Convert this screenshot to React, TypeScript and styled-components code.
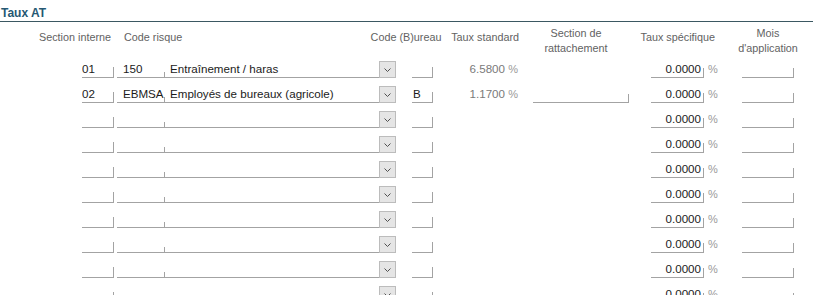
import React from 'react';
import styled, { createGlobalStyle } from 'styled-components';

interface Rate {
  section: string;
  code: string;
  label: string;
  office: string;
  standard?: string;
  attached: boolean;
  specific: string;
}

const rates: Rate[] = [
  { section: '01', code: '150', label: 'Entraînement / haras', office: '', standard: '6.5800', attached: false, specific: '0.0000' },
  { section: '02', code: 'EBMSA', label: 'Employés de bureaux (agricole)', office: 'B', standard: '1.1700', attached: true, specific: '0.0000' },
  ...Array.from({ length: 8 }, () => ({ section: '', code: '', label: '', office: '', attached: false, specific: '0.0000' })),
];

const COLUMNS = '82px 32px 3px 48px 214px 17px 16px 21px 86px 14px 96px 22px 53px 14px 24px 52px';

const GlobalStyle = createGlobalStyle`
  html, body {
    margin: 0;
    padding: 0;
    background: #ffffff;
    overflow: hidden;
  }
  body {
    font-family: 'Liberation Sans', Arial, sans-serif;
  }
`;

const Panel = styled.section`
  width: 840px;
  height: 295px;
  overflow: hidden;
  background: #ffffff;
`;

const Title = styled.h2`
  margin: 0;
  width: 813px;
  height: 22px;
  box-sizing: border-box;
  border-bottom: 1px solid #3b5862;
  padding: 6px 0 0 1px;
  font-size: 12px;
  line-height: 14px;
  font-weight: bold;
  color: #265873;
`;

const HeaderRow = styled.div`
  display: grid;
  grid-template-columns: ${COLUMNS};
  grid-template-areas: 'hsect hsect . hcode hcode hbur hbur hbur hstd hrat hrat . hspec hspec . hmois';
  height: 39px;
  box-sizing: border-box;
  padding-top: 4px;
  align-items: start;
`;

const HeadCell = styled.div<{ $area: string; $align: 'left' | 'center' | 'right'; $single?: boolean }>`
  grid-area: ${({ $area }) => $area};
  display: flex;
  flex-direction: column;
  align-items: ${({ $align }) => ($align === 'left' ? 'flex-start' : $align === 'right' ? 'flex-end' : 'center')};
  margin-top: ${({ $single }) => ($single ? '4px' : '0')};
  font-size: 10.8px;
  line-height: 15px;
  color: #626262;
  white-space: nowrap;
  text-align: ${({ $align }) => $align};
`;

const Rows = styled.div`
  display: flex;
  flex-direction: column;
`;

const Row = styled.div`
  display: grid;
  grid-template-columns: ${COLUMNS};
  grid-template-areas: '. sect . code label btn . bur std . rat . spec pct . mois';
  height: 25px;
  align-items: start;
`;

const Field = styled.div<{ $area: string; $tick: number; $pad?: number; $right?: boolean }>`
  grid-area: ${({ $area }) => $area};
  height: 17px;
  box-sizing: border-box;
  border-bottom: 1px solid #a3a3a3;
  background: linear-gradient(#a3a3a3, #a3a3a3) no-repeat right bottom / 1px ${({ $tick }) => $tick}px;
  padding: 0 ${({ $right }) => ($right ? 3 : 0)}px 0 ${({ $pad }) => $pad ?? 0}px;
  font-size: 11.6px;
  line-height: 16px;
  color: #1b1b1b;
  white-space: nowrap;
  overflow: hidden;
  text-align: ${({ $right }) => ($right ? 'right' : 'left')};
`;

const DropButton = styled.div`
  grid-area: btn;
  width: 17px;
  height: 17px;
  box-sizing: border-box;
  border: 1px solid #bcbcbc;
  background: #e5e5e5;
  display: flex;
  align-items: center;
  justify-content: center;
`;

const Standard = styled.div`
  grid-area: std;
  padding-right: 1px;
  font-size: 11.6px;
  line-height: 16px;
  color: #7a7a7a;
  text-align: right;
  white-space: nowrap;
`;

const Percent = styled.span<{ $area?: string }>`
  grid-area: ${({ $area }) => $area ?? 'auto'};
  padding-left: ${({ $area }) => ($area ? '4px' : '0')};
  font-size: 11px;
  line-height: 16px;
  color: #9a9a9a;
`;

const Chevron: React.FC = () => (
  <svg width="9" height="6" viewBox="0 0 9 6">
    <polyline points="1.5,1.5 4.5,4.5 7.5,1.5" fill="none" stroke="#505050" strokeWidth="1" />
  </svg>
);

const App: React.FC = () => (
  <Panel>
    <GlobalStyle />
    <Title>Taux AT</Title>
    <HeaderRow>
      <HeadCell $area="hsect" $align="right" $single style={{ paddingRight: 3 }}>Section interne</HeadCell>
      <HeadCell $area="hcode" $align="left" $single style={{ paddingLeft: 7 }}>Code risque</HeadCell>
      <HeadCell $area="hbur" $align="center" $single>Code (B)ureau</HeadCell>
      <HeadCell $area="hstd" $align="right" $single>Taux standard</HeadCell>
      <HeadCell $area="hrat" $align="center" style={{ paddingLeft: 4 }}>
        <span>Section de</span>
        <span>rattachement</span>
      </HeadCell>
      <HeadCell $area="hspec" $align="right" $single style={{ paddingRight: 3 }}>Taux spécifique</HeadCell>
      <HeadCell $area="hmois" $align="center">
        <span>Mois</span>
        <span>d'application</span>
      </HeadCell>
    </HeaderRow>
    <Rows>
      {rates.map((r, i) => (
        <Row key={i}>
          <Field $area="sect" $tick={10}>{r.section}</Field>
          <Field $area="code" $tick={5} $pad={6}>{r.code}</Field>
          <Field $area="label" $tick={0} $pad={5}>{r.label}</Field>
          <DropButton>
            <Chevron />
          </DropButton>
          <Field $area="bur" $tick={10} $pad={1}>{r.office}</Field>
          {r.standard && (
            <Standard>
              {r.standard} <Percent>%</Percent>
            </Standard>
          )}
          {r.attached && <Field $area="rat" $tick={8} />}
          <Field $area="spec" $tick={9} $right>{r.specific}</Field>
          <Percent $area="pct">%</Percent>
          <Field $area="mois" $tick={9} />
        </Row>
      ))}
    </Rows>
  </Panel>
);

export default App;
